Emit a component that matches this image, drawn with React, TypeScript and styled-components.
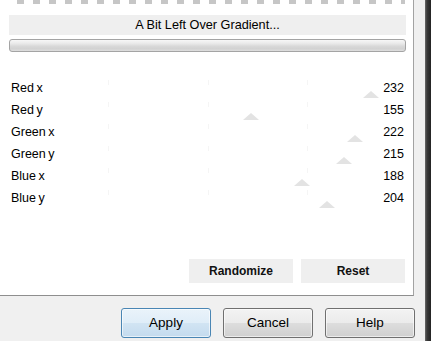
import styled, { createGlobalStyle } from 'styled-components';

const sliders = [
  { label: 'Red x', value: 232 },
  { label: 'Red y', value: 155 },
  { label: 'Green x', value: 222 },
  { label: 'Green y', value: 215 },
  { label: 'Blue x', value: 188 },
  { label: 'Blue y', value: 204 },
];

const TRACK = 397;

const GlobalStyle = createGlobalStyle`
  html, body {
    margin: 0;
    padding: 0;
    width: 431px;
    height: 341px;
    overflow: hidden;
    background: #f0f0f0;
    font-family: "Liberation Sans", Arial, sans-serif;
  }
`;

function App() {
  return (
    <>
      <GlobalStyle />
      <Window>
        <Main>
          <Panel>
            <Checker />
            <Title>A Bit Left Over Gradient...</Title>
            <Progress />
            <SliderList>
              {sliders.map((s) => (
                <SliderRow key={s.label}>
                  <Tick $at={0.25} />
                  <Tick $at={0.5} />
                  <Tick $at={0.75} />
                  <Label>{s.label}</Label>
                  <Value>{s.value}</Value>
                  <Thumb style={{ left: (s.value / 255) * TRACK - 7.5 }} />
                </SliderRow>
              ))}
            </SliderList>
            <ActionRow>
              <FlatButton>Randomize</FlatButton>
              <FlatButton>Reset</FlatButton>
            </ActionRow>
          </Panel>
          <Footer>
            <DialogButton $primary>Apply</DialogButton>
            <DialogButton>Cancel</DialogButton>
            <DialogButton>Help</DialogButton>
          </Footer>
        </Main>
        <DarkEdge />
      </Window>
    </>
  );
}

const Window = styled.div`
  display: flex;
  width: 431px;
  height: 341px;
`;

const Main = styled.div`
  display: flex;
  flex-direction: column;
  width: 425px;
  background: #f0f0f0;
`;

const DarkEdge = styled.div`
  flex: 1;
  background: linear-gradient(90deg, #6b6b6b 0, #3a3a3a 2px, #232323 100%);
`;

const Panel = styled.div`
  box-sizing: border-box;
  width: 414px;
  height: 296px;
  background: #fff;
  border-right: 1px solid #a3a3a3;
  border-bottom: 1px solid #8e8e8e;
  padding: 0 7px 0 9px;
  display: flex;
  flex-direction: column;
`;

const Checker = styled.div`
  height: 4px;
  margin: 0 1px 0 8px;
  background: repeating-linear-gradient(90deg, #c6c6c6 0 7px, transparent 7px 16px);
`;

const Title = styled.div`
  margin-top: 11px;
  height: 20px;
  line-height: 20px;
  background: #efefef;
  text-align: center;
  font-size: 12.7px;
  color: #000;
`;

const Progress = styled.div`
  box-sizing: border-box;
  margin-top: 4px;
  height: 13px;
  border: 1px solid #a4a4a4;
  border-radius: 3px;
  background: linear-gradient(#f7f7f7 0%, #e8e8e8 35%, #d9d9d9 55%, #d2d2d2 80%, #dedede 100%);
`;

const SliderList = styled.div`
  margin-top: 25px;
  display: flex;
  flex-direction: column;
`;

const SliderRow = styled.div`
  position: relative;
  height: 22px;
  display: flex;
  align-items: center;
  justify-content: space-between;
  padding: 0 2px 0 2px;
  font-size: 12.5px;
  color: #000;
`;

const Label = styled.span`
  position: relative;
  z-index: 1;
  word-spacing: -1px;
`;

const Value = styled.span`
  position: relative;
  z-index: 1;
`;

const Tick = styled.div<{ $at: number }>`
  position: absolute;
  top: 3px;
  left: ${(p) => p.$at * TRACK}px;
  width: 1px;
  height: 5px;
  background: #f5f5f5;
`;

const Thumb = styled.div`
  position: absolute;
  top: 14px;
  width: 0;
  height: 0;
  border-left: 8px solid transparent;
  border-right: 8px solid transparent;
  border-bottom: 7px solid #e3e3e3;
`;

const ActionRow = styled.div`
  margin-top: 50px;
  display: flex;
  justify-content: flex-end;
  gap: 8px;
  padding-right: 1px;
`;

const FlatButton = styled.div`
  width: 104px;
  height: 24px;
  line-height: 24px;
  background: #efefef;
  text-align: center;
  font-size: 12px;
  font-weight: bold;
  color: #111;
`;

const Footer = styled.div`
  flex: 1;
  display: flex;
  justify-content: flex-end;
  align-items: flex-start;
  gap: 12px;
  padding: 12px 10px 0 0;
`;

const DialogButton = styled.div<{ $primary?: boolean }>`
  box-sizing: border-box;
  width: 90px;
  height: 30px;
  line-height: 28px;
  text-align: center;
  font-size: 13.5px;
  color: #000;
  border-radius: 3px;
  border: 1px solid ${(p) => (p.$primary ? '#4a86b4' : '#707070')};
  background: ${(p) =>
    p.$primary
      ? 'linear-gradient(#eaf3fa 0%, #dfedf8 50%, #d1e4f3 51%, #c4dbee 100%)'
      : 'linear-gradient(#f3f3f3 0%, #ebebeb 50%, #dddddd 51%, #d0d0d0 100%)'};
  box-shadow: inset 0 0 0 1px rgba(255, 255, 255, 0.6);
`;

export default App;
